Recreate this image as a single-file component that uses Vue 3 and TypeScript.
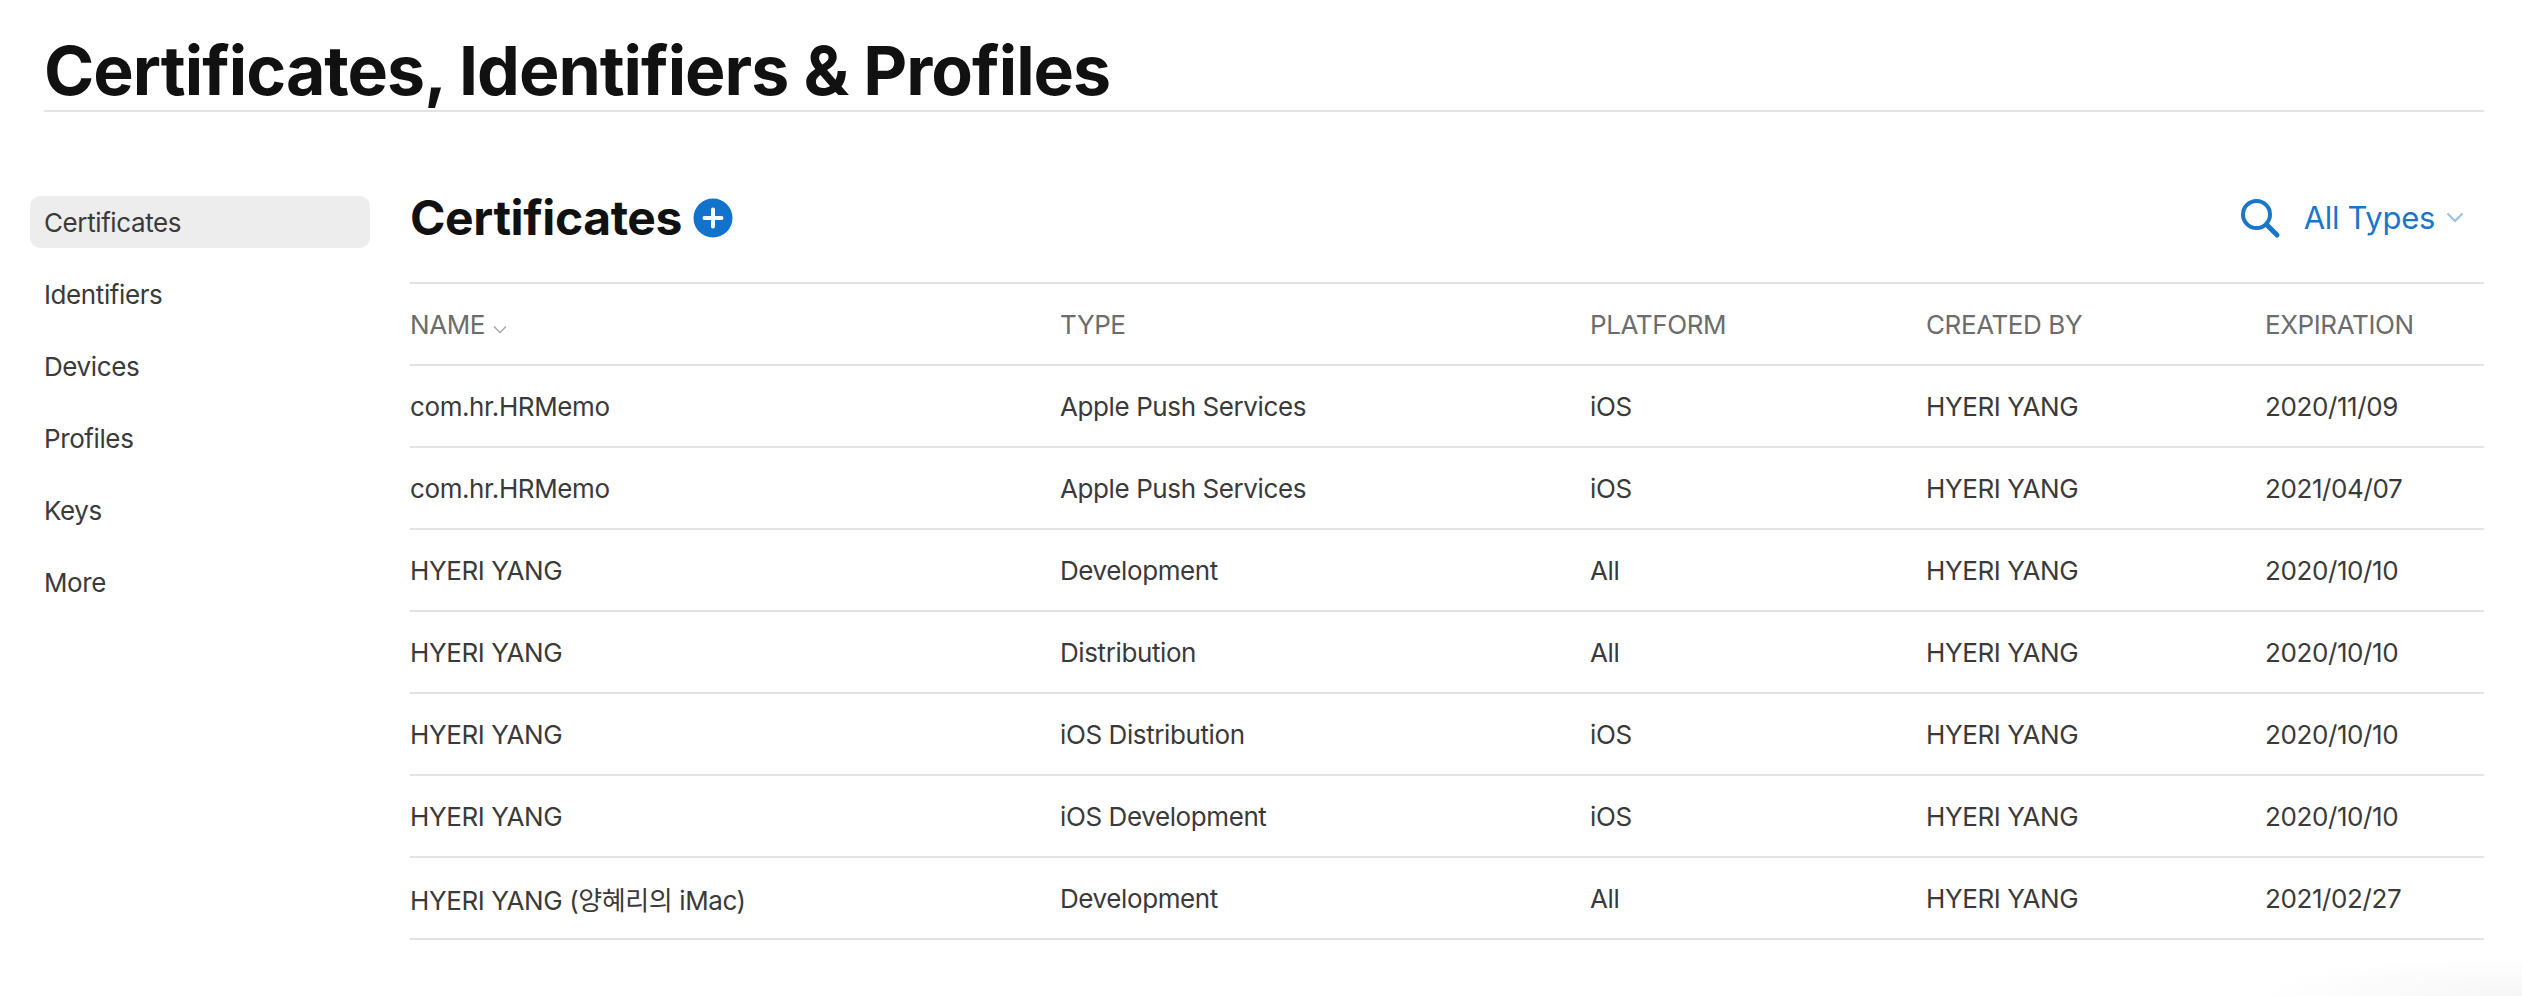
<script setup lang="ts">
const navItems = ['Certificates', 'Identifiers', 'Devices', 'Profiles', 'Keys', 'More']

const columns = ['TYPE', 'PLATFORM', 'CREATED BY', 'EXPIRATION']

const rows = [
  { name: 'com.hr.HRMemo', type: 'Apple Push Services', platform: 'iOS', by: 'HYERI YANG', exp: '2020/11/09' },
  { name: 'com.hr.HRMemo', type: 'Apple Push Services', platform: 'iOS', by: 'HYERI YANG', exp: '2021/04/07' },
  { name: 'HYERI YANG', type: 'Development', platform: 'All', by: 'HYERI YANG', exp: '2020/10/10' },
  { name: 'HYERI YANG', type: 'Distribution', platform: 'All', by: 'HYERI YANG', exp: '2020/10/10' },
  { name: 'HYERI YANG', type: 'iOS Distribution', platform: 'iOS', by: 'HYERI YANG', exp: '2020/10/10' },
  { name: 'HYERI YANG', type: 'iOS Development', platform: 'iOS', by: 'HYERI YANG', exp: '2020/10/10' },
  { name: 'HYERI YANG (양혜리의 iMac)', type: 'Development', platform: 'All', by: 'HYERI YANG', exp: '2021/02/27' },
]
</script>

<template>
  <div class="page">
    <header class="page-header">
      <h1>Certificates, Identifiers &amp; Profiles</h1>
    </header>

    <div class="body">
      <nav class="sidebar">
        <a
          v-for="(item, i) in navItems"
          :key="item"
          class="nav-item"
          :class="{ active: i === 0 }"
        >{{ item }}</a>
      </nav>

      <main class="content">
        <div class="toolbar">
          <h2>Certificates</h2>
          <svg class="add" width="40" height="40" viewBox="0 0 40 40">
            <circle cx="20" cy="20" r="19.5" fill="#1273cc" />
            <path d="M20 11.5v17M11.5 20h17" stroke="#fff" stroke-width="4" stroke-linecap="round" />
          </svg>
          <div class="tools">
            <svg class="search" width="42" height="42" viewBox="0 0 42 42" fill="none">
              <circle cx="17.5" cy="17.5" r="13.5" stroke="#1b75c9" stroke-width="4" />
              <path d="M27.5 27.5L38 38" stroke="#1b75c9" stroke-width="5" stroke-linecap="round" />
            </svg>
            <span class="filter">All Types</span>
            <svg class="caret" width="18" height="11" viewBox="0 0 18 11" fill="none">
              <path d="M1.5 1.5L9 9l7.5-7.5" stroke="#97c1e8" stroke-width="2" />
            </svg>
          </div>
        </div>

        <div class="row head">
          <div class="cell">
            NAME
            <svg class="sort" width="14" height="9" viewBox="0 0 14 9" fill="none">
              <path d="M1 1.5L7 7.5l6-6" stroke="#a8a8a8" stroke-width="1.5" />
            </svg>
          </div>
          <div v-for="col in columns" :key="col" class="cell">{{ col }}</div>
        </div>

        <div v-for="(row, i) in rows" :key="i" class="row">
          <div class="cell">{{ row.name }}</div>
          <div class="cell">{{ row.type }}</div>
          <div class="cell">{{ row.platform }}</div>
          <div class="cell">{{ row.by }}</div>
          <div class="cell">{{ row.exp }}</div>
        </div>
      </main>
    </div>
    <div class="corner-fade"></div>
  </div>
</template>

<style>
html, body {
  margin: 0;
  background: #fff;
}
</style>

<style scoped>
.page {
  position: relative;
  width: 2522px;
  height: 996px;
  overflow: hidden;
  font-family: Inter, "Noto Sans CJK KR", sans-serif;
  color: #3a3a3a;
  -webkit-font-smoothing: antialiased;
}

.page-header {
  margin: 0 38px 0 44px;
  height: 110px;
  border-bottom: 2px solid #e3e3e3;
}

h1 {
  margin: 0;
  padding-top: 28px;
  font-size: 68px;
  line-height: 84px;
  font-weight: 700;
  letter-spacing: -1px;
  color: #111;
}

.body {
  display: flex;
  padding: 84px 38px 0 30px;
}

.sidebar {
  width: 340px;
  margin-right: 40px;
  display: flex;
  flex-direction: column;
  gap: 20px;
}

.nav-item {
  height: 52px;
  line-height: 54px;
  padding-left: 14px;
  font-size: 26px;
  letter-spacing: -0.4px;
  border-radius: 10px;
}

.nav-item.active {
  background: #ededed;
}

.content {
  flex: 1;
}

.toolbar {
  display: flex;
  align-items: center;
  height: 43px;
  padding-bottom: 43px;
  border-bottom: 2px solid #e3e3e3;
}

h2 {
  margin: 0;
  font-size: 48px;
  line-height: 60px;
  font-weight: 700;
  letter-spacing: -0.4px;
  color: #111;
}

.add {
  margin-left: 11px;
}

.tools {
  margin-left: auto;
  display: flex;
  align-items: center;
  padding-right: 20px;
}

.filter {
  margin: 0 11px 0 23px;
  font-size: 31px;
  letter-spacing: -0.3px;
  color: #1b75c9;
}

.row {
  display: grid;
  grid-template-columns: 650px 530px 336px 339px 219px;
  align-items: center;
  height: 80px;
  border-bottom: 2px solid #e3e3e3;
  font-size: 26px;
  letter-spacing: -0.4px;
}

.cell {
  padding-top: 1px;
}

.row.head {
  color: #6c6c6c;
}

.sort {
  margin-left: 1px;
}

.corner-fade {
  position: absolute;
  right: 0;
  bottom: 0;
  width: 260px;
  height: 40px;
  background: radial-gradient(ellipse at 100% 100%, #f6f6f6, #fff 72%);
}
</style>
